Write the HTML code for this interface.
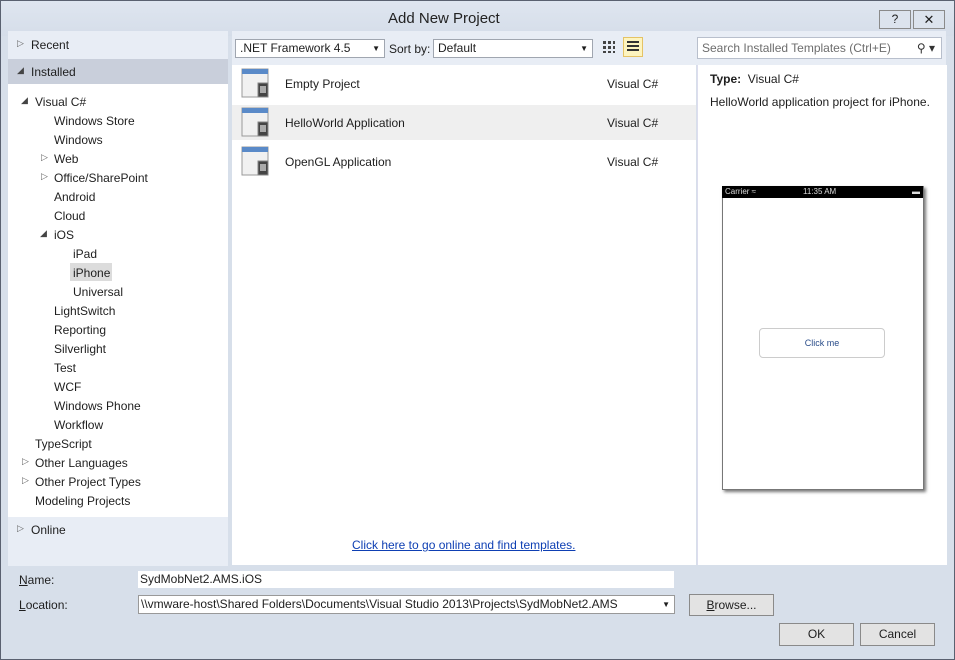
<!DOCTYPE html><html><head><style>
body{margin:0;width:955px;height:660px;overflow:hidden;font-family:"Liberation Sans",sans-serif;font-size:12px;color:#1e1e1e}
.win{position:absolute;left:0;top:0;width:955px;height:660px;background:#d7dfea}
.frame{position:absolute;left:0;top:0;width:955px;height:660px;box-sizing:border-box;border:1px solid #5a6170;pointer-events:none}
.a{position:absolute;white-space:nowrap}
.tree div{position:absolute;white-space:nowrap}
.btn{position:absolute;border:1px solid #8a8a8a;background:#e3e3e3;text-align:center;line-height:21px}
</style></head><body><div class="win">
<div class="a" style="left:0;top:0;width:955px;height:36px;background:linear-gradient(#dfe6f0,#d5dde9)"></div>
<div class="a" style="left:388px;top:10px;font-size:15px;color:#222">Add New Project</div>
<div class="btn" style="left:879px;top:10px;width:30px;height:17px;line-height:17px;font-size:12px;background:#dce3ed">?</div>
<div class="btn" style="left:913px;top:10px;width:30px;height:17px;line-height:17px;font-size:13px;background:#dce3ed">✕</div>
<div class="a" style="left:8px;top:31px;width:220px;height:535px;background:#e8edf5"></div>
<div class="a" style="left:8px;top:59px;width:220px;height:25px;background:#c9cfdb"></div>
<div class="a" style="left:8px;top:84px;width:220px;height:433px;background:#fff"></div>
<div class="tree">
<div style="left:17px;top:38px;font-size:9px;color:#666">▷</div><div style="left:31px;top:38px">Recent</div>
<div style="left:17px;top:65px;font-size:9px;color:#444">◢</div><div style="left:31px;top:65px">Installed</div>
<div style="left:21px;top:95px;font-size:9px;color:#444">◢</div><div style="left:35px;top:95px">Visual C#</div>
<div style="left:54px;top:114px">Windows Store</div>
<div style="left:54px;top:133px">Windows</div>
<div style="left:41px;top:152px;font-size:9px;color:#666">▷</div><div style="left:54px;top:152px">Web</div>
<div style="left:41px;top:171px;font-size:9px;color:#666">▷</div><div style="left:54px;top:171px">Office/SharePoint</div>
<div style="left:54px;top:190px">Android</div>
<div style="left:54px;top:209px">Cloud</div>
<div style="left:40px;top:228px;font-size:9px;color:#444">◢</div><div style="left:54px;top:228px">iOS</div>
<div style="left:73px;top:247px">iPad</div>
<div style="left:70px;top:263px;width:42px;height:18px;background:#dcdcdc"></div><div style="left:73px;top:266px">iPhone</div>
<div style="left:73px;top:285px">Universal</div>
<div style="left:54px;top:304px">LightSwitch</div>
<div style="left:54px;top:323px">Reporting</div>
<div style="left:54px;top:342px">Silverlight</div>
<div style="left:54px;top:361px">Test</div>
<div style="left:54px;top:380px">WCF</div>
<div style="left:54px;top:399px">Windows Phone</div>
<div style="left:54px;top:418px">Workflow</div>
<div style="left:35px;top:437px">TypeScript</div>
<div style="left:22px;top:456px;font-size:9px;color:#666">▷</div><div style="left:35px;top:456px">Other Languages</div>
<div style="left:22px;top:475px;font-size:9px;color:#666">▷</div><div style="left:35px;top:475px">Other Project Types</div>
<div style="left:35px;top:494px">Modeling Projects</div>
<div style="left:17px;top:523px;font-size:9px;color:#666">▷</div><div style="left:31px;top:523px">Online</div>
</div>
<div class="a" style="left:232px;top:31px;width:714px;height:34px;background:#e8edf5"></div>
<div class="a" style="left:235px;top:39px;border:1px solid #a0a6b0;background:#fff;line-height:17px;padding-left:4px;box-sizing:border-box;width:150px;height:19px">.NET Framework 4.5<span style="position:absolute;right:4px;font-size:8px">▼</span></div>
<div class="a" style="left:389px;top:42px">Sort by:</div>
<div class="a" style="left:433px;top:39px;width:160px;height:19px;box-sizing:border-box;border:1px solid #a0a6b0;background:#fff;line-height:17px;padding-left:4px">Default<span style="position:absolute;right:4px;font-size:8px">▼</span></div>
<div class="a" style="left:603px;top:41px;width:12px;height:12px;background:repeating-linear-gradient(90deg,#444 0 3px,transparent 3px 5px);-webkit-mask:repeating-linear-gradient(#000 0 3px,transparent 3px 5px)"></div>
<div class="a" style="left:623px;top:37px;width:20px;height:20px;box-sizing:border-box;border:1px solid #e5c365;background:#fdf4bf"></div>
<div class="a" style="left:627px;top:41px;width:12px;height:12px;background:repeating-linear-gradient(#333 0 2px,transparent 2px 4px)"></div>
<div class="a" style="left:697px;top:37px;width:245px;height:22px;box-sizing:border-box;border:1px solid #b8bfcc;background:#fff;color:#6d6d6d;line-height:20px;padding-left:4px">Search Installed Templates (Ctrl+E)<span style="position:absolute;right:6px;color:#333">⚲ ▾</span></div>
<div class="a" style="left:232px;top:65px;width:464px;height:500px;background:#fff"></div>
<div class="a" style="left:232px;top:105px;width:464px;height:35px;background:#efefef"></div>
<div class="a" style="left:697px;top:65px;width:249px;height:500px;background:#fff;border-left:1px solid #dde"></div>
<svg class="a" style="left:241px;top:68px" width="30" height="32"><rect x="1" y="1" width="26" height="28" fill="#f1f1f1" stroke="#999"/><rect x="1" y="1" width="26" height="5" fill="#5a8ac8"/><rect x="17" y="15" width="10" height="14" fill="#444" stroke="#888"/><rect x="19" y="18" width="6" height="7" fill="#aaa"/></svg>
<svg class="a" style="left:241px;top:107px" width="30" height="32"><rect x="1" y="1" width="26" height="28" fill="#f1f1f1" stroke="#999"/><rect x="1" y="1" width="26" height="5" fill="#5a8ac8"/><rect x="17" y="15" width="10" height="14" fill="#444" stroke="#888"/><rect x="19" y="18" width="6" height="7" fill="#aaa"/></svg>
<svg class="a" style="left:241px;top:146px" width="30" height="32"><rect x="1" y="1" width="26" height="28" fill="#f1f1f1" stroke="#999"/><rect x="1" y="1" width="26" height="5" fill="#5a8ac8"/><rect x="17" y="15" width="10" height="14" fill="#444" stroke="#888"/><rect x="19" y="18" width="6" height="7" fill="#aaa"/></svg>
<div class="a" style="left:285px;top:77px">Empty Project</div><div class="a" style="left:607px;top:77px">Visual C#</div>
<div class="a" style="left:285px;top:116px">HelloWorld Application</div><div class="a" style="left:607px;top:116px">Visual C#</div>
<div class="a" style="left:285px;top:155px">OpenGL Application</div><div class="a" style="left:607px;top:155px">Visual C#</div>
<div class="a" style="left:352px;top:538px;color:#0e3fb3;text-decoration:underline">Click here to go online and find templates.</div>
<div class="a" style="left:710px;top:72px"><b>Type:</b>&nbsp; Visual C#</div>
<div class="a" style="left:710px;top:95px">HelloWorld application project for iPhone.</div>
<div class="a" style="left:722px;top:186px;width:200px;height:302px;background:#fff;border:1px solid #777;box-shadow:2px 2px 3px #777"></div>
<div class="a" style="left:722px;top:186px;width:201px;height:12px;background:#000;color:#ddd;font-size:8px;line-height:12px"><span style="margin-left:3px">Carrier ≈</span><span style="position:absolute;left:81px">11:35 AM</span><span style="position:absolute;right:3px">▬</span></div>
<div class="a" style="left:759px;top:328px;width:124px;height:28px;border:1px solid #ccc;border-radius:4px;text-align:center;line-height:28px;font-size:9px;color:#2a4d8a">Click me</div>
<div class="a" style="left:19px;top:573px"><u>N</u>ame:</div>
<div class="a" style="left:138px;top:571px;width:536px;height:17px;background:#fff;line-height:17px;padding-left:2px;box-sizing:border-box">SydMobNet2.AMS.iOS</div>
<div class="a" style="left:19px;top:598px"><u>L</u>ocation:</div>
<div class="a" style="left:138px;top:595px;width:537px;height:19px;border:1px solid #999;background:#fff;line-height:17px;padding-left:2px;box-sizing:border-box">\\vmware-host\Shared Folders\Documents\Visual Studio 2013\Projects\SydMobNet2.AMS<span style="position:absolute;right:4px;font-size:8px">▼</span></div>
<div class="btn" style="left:689px;top:594px;width:83px;height:20px;line-height:20px"><u>B</u>rowse...</div>
<div class="btn" style="left:779px;top:623px;width:73px;height:21px">OK</div>
<div class="btn" style="left:860px;top:623px;width:73px;height:21px">Cancel</div>
</div><div class="frame"></div></body></html>
